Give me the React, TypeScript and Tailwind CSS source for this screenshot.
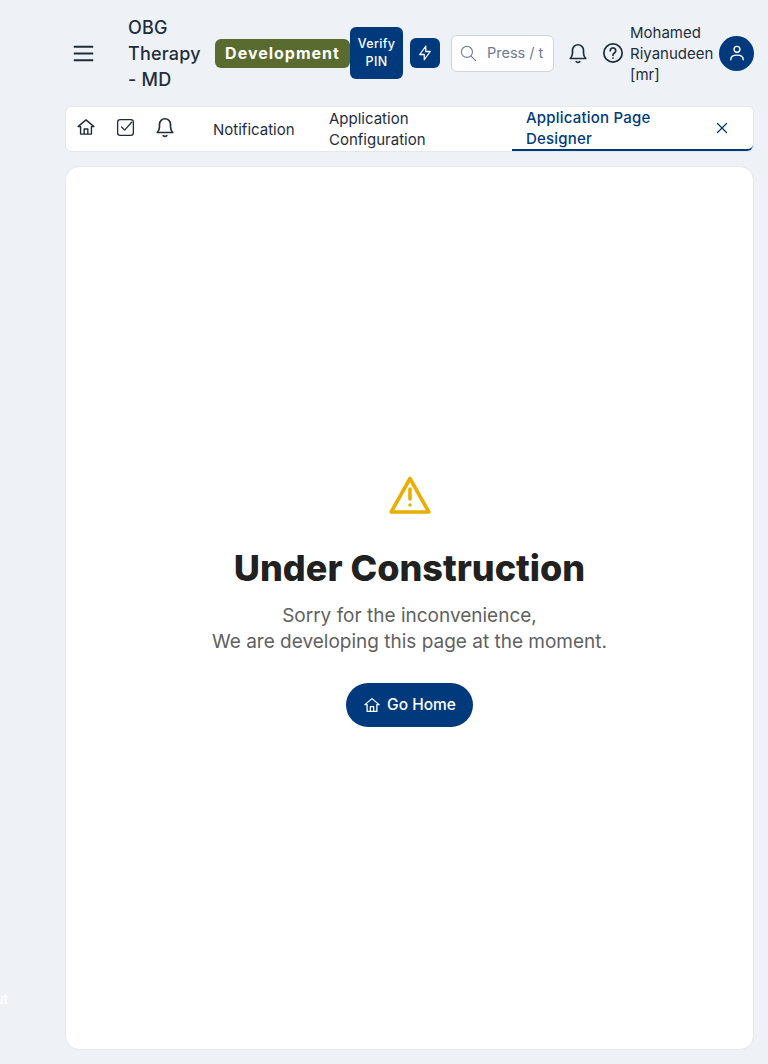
import { TbBolt, TbMenu2, TbSearch, TbX } from 'react-icons/tb';

function HomeIcon({ className }: { className: string }) {
  return (
    <svg viewBox="0 0 24 24" fill="none" stroke="currentColor" strokeWidth="1.7" strokeLinejoin="round" className={className}>
      <path d="M2.5 11.5 12 3.5l9.5 8h-3v9h-13v-9z" />
      <path d="M9.8 20.5v-6.2h4.4v6.2" />
    </svg>
  );
}

function CheckIcon({ className }: { className: string }) {
  return (
    <svg viewBox="0 0 24 24" fill="none" stroke="currentColor" strokeWidth="1.5" strokeLinecap="round" strokeLinejoin="round" className={className}>
      <rect x="3" y="3" width="18" height="18" rx="3" />
      <path d="m7.500 11.500 3.500 3.500 8-9" />
    </svg>
  );
}

function BellIcon({ className }: { className: string }) {
  return (
    <svg viewBox="0 0 24 24" fill="none" stroke="currentColor" strokeWidth="1.8" strokeLinecap="round" strokeLinejoin="round" className={className}>
      <path d="M3.5 18C5 16.5 6 15 6 12V9a6 6 0 0 1 12 0v3c0 3 1 4.500 2.500 6z" />
      <path d="M10 21.500q2 1.500 4 0" />
    </svg>
  );
}

function HelpIcon({ className }: { className: string }) {
  return (
    <svg viewBox="0 0 24 24" fill="none" stroke="currentColor" strokeWidth="1.9" strokeLinecap="round" className={className}>
      <circle cx="12" cy="12" r="10" />
      <path d="M9 9.500a3 3 0 1 1 4.500 2.600c-1 .6-1.500 1.200-1.500 2.400" />
      <path d="M12 17.500v.01" />
    </svg>
  );
}

function UserIcon({ className }: { className: string }) {
  return (
    <svg viewBox="0 0 24 24" fill="none" stroke="currentColor" strokeWidth="1.7" strokeLinecap="round" className={className}>
      <circle cx="12" cy="7.500" r="3.500" />
      <path d="M4.500 20c0-3.500 3-5.500 7.500-5.500s7.500 2 7.500 5.500" />
    </svg>
  );
}

function AlertIcon({ className }: { className: string }) {
  return (
    <svg viewBox="0 0 42 38" fill="none" stroke="currentColor" strokeWidth="3.6" strokeLinecap="round" strokeLinejoin="round" className={className}>
      <path d="M21 2.500 39.800 36H2.200z" />
      <path d="M21 13v10" />
      <path d="M21 29v.01" />
    </svg>
  );
}

export default function App() {
  return (
    <div className="relative flex h-[1064px] w-[768px] overflow-hidden bg-[#eef2f7] font-['Inter',sans-serif] text-[#1e2d3b]">
      {/* Collapsed sidebar, only the end of its label shows */}
      <aside className="relative w-[65px] shrink-0">
        <span className="absolute right-[57px] top-[991px] text-[13px] font-medium leading-4 text-white">Logout</span>
      </aside>

      <main className="flex w-[689px] shrink-0 flex-col">
        {/* Header */}
        <header className="flex h-[106px] items-center">
          <TbMenu2 strokeWidth={1.6} className="ml-[5px] h-[27px] w-[27px] shrink-0" />
          <div className="ml-[31px] mt-[2px] w-[87px] shrink-0 text-[18px] font-medium leading-[26px] tracking-[0.2px]">
            OBG
            <br />
            Therapy
            <br />- MD
          </div>
          <span className="flex h-[29px] w-[135px] shrink-0 items-center justify-center rounded-[6px] bg-[#596b2e] text-[16px] font-bold tracking-[1px] text-white">Development</span>
          <button className="h-[52px] w-[53px] shrink-0 rounded-[6px] bg-[#003a7d] text-center text-[12.5px] font-medium leading-[18px] tracking-[0.3px] text-white">Verify PIN</button>
          <button className="ml-[7px] flex h-[30px] w-[30px] shrink-0 items-center justify-center rounded-[6px] bg-[#003a7d] text-white">
            <TbBolt strokeWidth={1.7} className="h-[18px] w-[18px]" />
          </button>
          <div className="ml-[11px] flex h-[37px] w-[103px] shrink-0 items-center overflow-hidden rounded-[6px] border border-[#ced4de] bg-white pl-[7px]">
            <TbSearch strokeWidth={1.5} className="h-[19px] w-[19px] shrink-0 text-[#74839a]" />
            <span className="ml-[9px] whitespace-nowrap text-[14.5px] text-[#6d7c93]">Press / t</span>
          </div>
          <BellIcon className="ml-[13px] h-[22px] w-[22px] shrink-0" />
          <HelpIcon className="ml-[13px] h-[22px] w-[22px] shrink-0" />
          <div className="ml-[6px] w-[89px] shrink-0 text-[15px] leading-[21px]">Mohamed Riyanudeen [mr]</div>
          <div className="flex h-[35px] w-[35px] shrink-0 items-center justify-center rounded-full bg-[#003a7d] text-white">
            <UserIcon className="h-[20px] w-[20px]" />
          </div>
        </header>

        {/* Tabs */}
        <nav className="flex h-[46px] items-center rounded-[6px] border border-[#e3e8ef] bg-white">
          <HomeIcon className="mb-[4px] ml-[10px] h-[20px] w-[20px] shrink-0" />
          <CheckIcon className="mb-[4px] ml-[19px] h-[21px] w-[21px] shrink-0" />
          <BellIcon className="mb-[4px] ml-[18px] h-[22px] w-[22px] shrink-0" />
          <span className="ml-[37px] w-[116px] shrink-0 text-[15px] leading-[21px]">Notification</span>
          <span className="w-[183px] shrink-0 text-[15px] leading-[21px]">
            Application
            <br />
            Configuration
          </span>
          <div className="flex flex-1 items-center self-stretch rounded-br-[6px] border-b-2 border-[#003a7d] pl-[14px] pr-[22px] text-[#003a7d]">
            <span className="w-[150px] text-[15px] font-medium leading-[21px] tracking-[0.2px]">Application Page Designer</span>
            <TbX strokeWidth={1.7} className="ml-auto h-[18px] w-[18px]" />
          </div>
        </nav>

        {/* Content */}
        <section className="mt-[14px] flex h-[884px] flex-col items-center rounded-[14px] border border-[#e3e8ef] bg-white pt-[309px]">
          <AlertIcon className="h-[38px] w-[42px] text-[#e9ae00]" />
          <h1 className="mt-[31px] text-[36px] font-extrabold leading-[46px] text-[#212121]">Under Construction</h1>
          <p className="mt-[12px] text-center text-[19px] leading-[26px] text-[#616161]">
            Sorry for the inconvenience,
            <br />
            We are developing this page at the moment.
          </p>
          <button className="mt-[28px] flex h-[44px] w-[127px] items-center justify-center gap-[6px] rounded-full bg-[#003a7d] text-[15.5px] font-medium text-white">
            <HomeIcon className="h-[18px] w-[18px]" />
            Go Home
          </button>
        </section>
      </main>
    </div>
  );
}
